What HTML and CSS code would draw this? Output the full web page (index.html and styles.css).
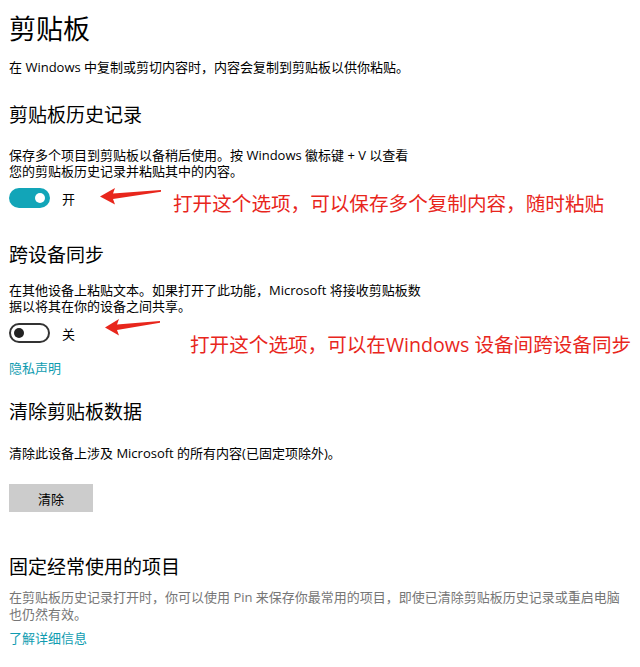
FILE: index.html
```html
<!DOCTYPE html>
<html lang="zh-CN">
<head>
    <meta charset="UTF-8">
    <meta name="viewport" content="width=device-width, initial-scale=1.0">
    <title>剪贴板</title>
    <link rel="stylesheet" href="styles.css">
</head>
<body>
    <h1>剪贴板</h1>
    <p class="intro">在 Windows 中复制或剪切内容时，内容会复制到剪贴板以供你粘贴。</p>

    <!-- 剪贴板历史记录 -->
    <h2 class="first-head">剪贴板历史记录</h2>
    <p class="desc desc-history">保存多个项目到剪贴板以备稍后使用。按 Windows 徽标键 + V 以查看<br>您的剪贴板历史记录并粘贴其中的内容。</p>
    <div class="toggle-row">
        <span class="toggle on"><span class="knob"></span></span>
        <span class="toggle-label">开</span>
        <svg class="arrow arrow-one" width="62" height="18" viewBox="0 0 62 18">
            <polygon points="0,9.5 15,1 13,6.5 61,3 61,4.8 13,12 15,17.5" fill="#e8261c"/>
        </svg>
        <span class="note note-one">打开这个选项，可以保存多个复制内容，随时粘贴</span>
    </div>

    <!-- 跨设备同步 -->
    <h2 class="sync-head">跨设备同步</h2>
    <p class="desc desc-sync">在其他设备上粘贴文本。如果打开了此功能，Microsoft 将接收剪贴板数<br>据以将其在你的设备之间共享。</p>
    <div class="toggle-row">
        <span class="toggle off"><span class="knob"></span></span>
        <span class="toggle-label">关</span>
        <svg class="arrow arrow-two" width="56" height="18" viewBox="0 0 56 18">
            <polygon points="0,9.5 14,1 12,6.5 55,3 55,4.8 12,12 14,17.5" fill="#e8261c"/>
        </svg>
        <span class="note note-two">打开这个选项，可以在Windows 设备间跨设备同步</span>
    </div>
    <a class="link privacy" href="#">隐私声明</a>

    <!-- 清除剪贴板数据 -->
    <h2 class="clear-head">清除剪贴板数据</h2>
    <p class="desc desc-clear">清除此设备上涉及 Microsoft 的所有内容(已固定项除外)。</p>
    <button class="clear-btn">清除</button>

    <!-- 固定经常使用的项目 -->
    <h2 class="pin-head">固定经常使用的项目</h2>
    <p class="desc desc-pin">在剪贴板历史记录打开时，你可以使用 Pin 来保存你最常用的项目，即使已清除剪贴板历史记录或重启电脑<br>也仍然有效。</p>
    <a class="link more" href="#">了解详细信息</a>
</body>
</html>
```

FILE: styles.css
```css
/* Basic page */
body {
    margin: 0;
    padding: 0 9px;
    background: #fff;
    color: #000;
    font-family: "Open Sans", "Noto Sans CJK SC", sans-serif;
}

h1 {
    font-size: 27px;
    font-weight: 400;
    line-height: 36px;
    margin: 11px 0 0;
}

h2 {
    font-size: 19px;
    font-weight: 400;
    line-height: 28px;
    margin: 0;
}

.intro {
    font-size: 13px;
    line-height: 20px;
    margin: 10px 0 0;
}

.desc {
    font-size: 13px;
    line-height: 16px;
    margin: 0;
}

/* section spacing */
.first-head { margin-top: 24px; }
.desc-history { margin-top: 18px; }
.sync-head { margin-top: 33px; }
.desc-sync { margin-top: 13px; }
.clear-head { margin-top: 20px; }
.desc-clear { margin-top: 19px; }
.pin-head { margin-top: 41px; }

.desc-pin {
    margin-top: 8px;
    line-height: 17px;
    color: #767676;
    white-space: nowrap;
}

/* Toggle switch */
.toggle-row {
    display: flex;
    align-items: center;
    height: 20px;
    margin-top: 9px;
}

.toggle-row > * {
    flex-shrink: 0;
}

.toggle {
    position: relative;
    box-sizing: border-box;
    width: 41px;
    height: 20px;
    border-radius: 10px;
}

.toggle.on {
    background: #12a5b8;
}

.toggle.off {
    border: 2px solid #333;
}

.knob {
    position: absolute;
    top: 50%;
    width: 10px;
    height: 10px;
    margin-top: -5px;
    border-radius: 50%;
}

.toggle.on .knob {
    right: 5px;
    background: #fff;
}

.toggle.off .knob {
    left: 3px;
    background: #222;
}

.toggle-label {
    font-size: 13px;
    margin-left: 12px;
}

/* Red annotations */
.arrow {
    position: relative;
}

.arrow-one {
    margin-left: 25px;
    top: -2px;
}

.arrow-two {
    margin-left: 30px;
    top: -6px;
}

.note {
    position: relative;
    color: #e8261c;
    font-size: 19.6px;
    white-space: nowrap;
}

.note-one {
    margin-left: 11px;
    top: 4px;
}

.note-two {
    margin-left: 29px;
    top: 10px;
}

/* Links and button */
.link {
    display: block;
    color: #0f9cb0;
    text-decoration: none;
    font-size: 13px;
    line-height: 20px;
}

.privacy { margin-top: 15px; }
.more { margin-top: 5px; }

.clear-btn {
    display: block;
    width: 84px;
    height: 28px;
    margin-top: 23px;
    background: #ccc;
    border: none;
    padding: 0;
    font-family: inherit;
    font-size: 13px;
    color: #000;
}
```
